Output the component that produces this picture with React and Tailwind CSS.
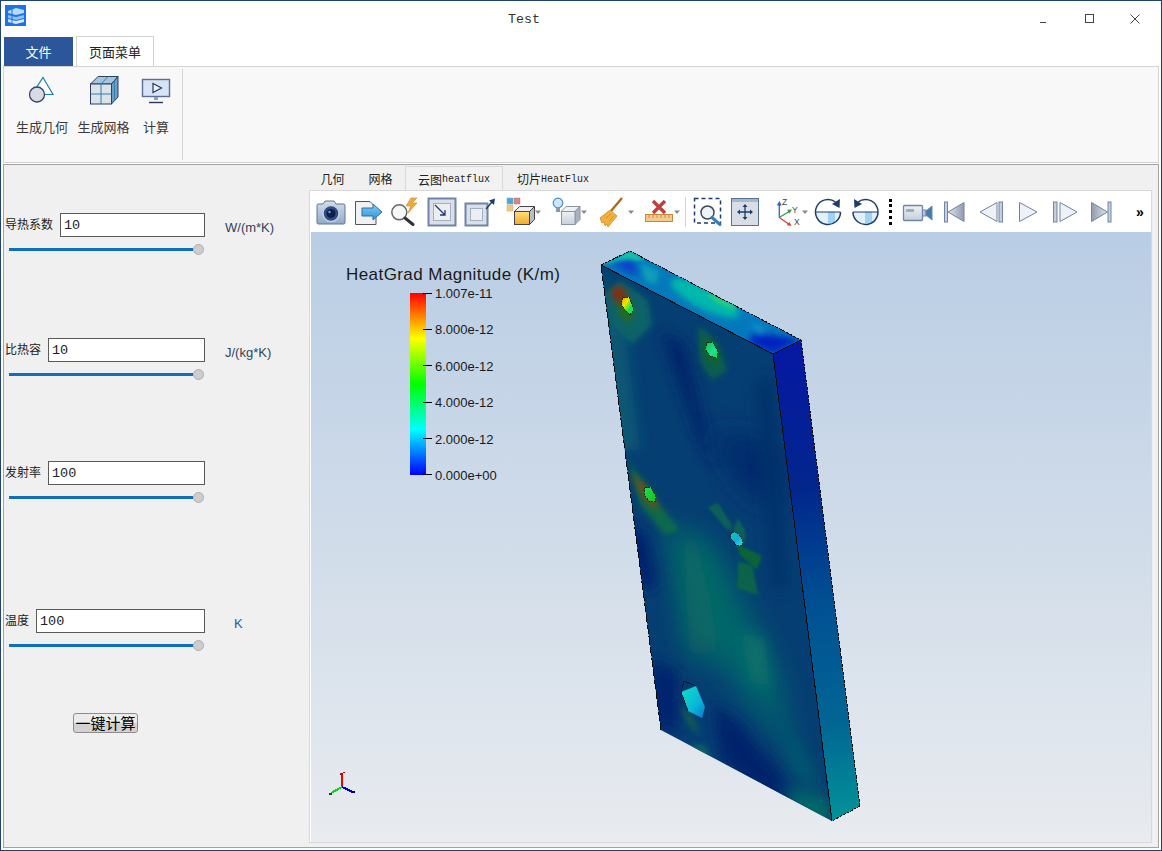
import React from "react";

const CJK = "font-['Noto_Sans_CJK_SC','Liberation_Sans',sans-serif]";
const NAVY = "#1f3b6e";
const EDGE = "#6f84a8";

function Ico({ w = 37, children }) {
  return (
    <div className="flex items-center justify-center shrink-0 h-[36px]" style={{ width: w }}>
      <svg width={w} height="36" viewBox={`0 0 ${w} 36`} fill="none">{children}</svg>
    </div>
  );
}
const Drop = ({ x }) => <path d={`M${x - 3} 16.5h6l-3 3.5z`} fill="#8a8a8a" />;

function Toolbar() {
  return (
    <div className="h-[41px] bg-white flex items-center pl-[2px] shrink-0 pt-px">
      <Ico>
        <defs>
          <linearGradient id="gBody" x1="0" y1="0" x2="0" y2="1"><stop offset="0" stopColor="#d5deea" /><stop offset="1" stopColor="#93a9c6" /></linearGradient>
          <linearGradient id="gPale" x1="0" y1="0" x2="0" y2="1"><stop offset="0" stopColor="#eef1f5" /><stop offset="1" stopColor="#c6cfdb" /></linearGradient>
          <linearGradient id="gDarkTri" x1="0" y1="0" x2="1" y2="0"><stop offset="0" stopColor="#8f9bae" /><stop offset="1" stopColor="#dfe3ea" /></linearGradient>
          <linearGradient id="gDarkTriR" x1="1" y1="0" x2="0" y2="0"><stop offset="0" stopColor="#8f9bae" /><stop offset="1" stopColor="#dfe3ea" /></linearGradient>
          <linearGradient id="gYel" x1="0" y1="0" x2="0" y2="1"><stop offset="0" stopColor="#ffdf7a" /><stop offset="1" stopColor="#f3a92c" /></linearGradient>
          <linearGradient id="gBlueArrow" x1="0" y1="0" x2="0" y2="1"><stop offset="0" stopColor="#7fcdf3" /><stop offset="1" stopColor="#2f93d6" /></linearGradient>
        </defs>
        <path d="M5 10h5l2-3h9l2 3h8a1.500 1.500 0 0 1 1 1v18a1.500 1.500 0 0 1-1 1H5a1.500 1.500 0 0 1-1-1V11a1.500 1.500 0 0 1 1-1z" fill="url(#gBody)" stroke="#5c769c" />
        <circle cx="18" cy="19.500" r="8" fill="#2c4c86" stroke="#c5d0df" strokeWidth="1.500" />
        <circle cx="18" cy="19.500" r="4.500" fill="#0f1f48" />
        <circle cx="16.500" cy="18" r="1.200" fill="#7f9ad0" />
      </Ico>
      <Ico>
        <path d="M5.500 7.500H20l6 6v17H5.500z" fill="#f1f1f1" stroke="#555" />
        <path d="M12 14H23V10L32 18L23 26V22H12Z" fill="url(#gBlueArrow)" stroke="#2a6fa8" />
      </Ico>
      <Ico>
        <path d="M24 4l-5 8h5l-3 7 9-10h-5l5-5z" fill="#f2a93a" stroke="#d08420" strokeWidth=".6" />
        <circle cx="12.300" cy="18.300" r="7.500" fill="#f4f6f8" stroke="#666" strokeWidth="1.500" />
        <path d="M18 24l8 6.500" stroke="#333" strokeWidth="3" strokeLinecap="round" />
      </Ico>
      <Ico>
        <rect x="4.500" y="4.500" width="27" height="27" fill="#dbe0e8" stroke={EDGE} strokeWidth="2" />
        <rect x="9.500" y="9.500" width="17" height="17" fill="#eceef2" stroke="#a4afc0" />
        <path d="M11 11l10 10M21 16v5h-5" stroke={NAVY} strokeWidth="1.300" />
      </Ico>
      <Ico>
        <rect x="4.500" y="9.500" width="22" height="22" fill="#dbe0e8" stroke={EDGE} strokeWidth="2" />
        <rect x="9.500" y="14.500" width="12" height="12" fill="#eceef2" stroke="#a4afc0" />
        <path d="M25 15L31 8" stroke={NAVY} strokeWidth="1.400" />
        <path d="M34 4.500l-1 6.500-5-4.500z" fill={NAVY} />
      </Ico>
      <Ico w={48}>
        <rect x="9" y="4" width="6" height="6" fill="#4ea5e0" stroke="#8aa" strokeWidth=".5" />
        <rect x="16" y="4" width="6" height="6" fill="#d08a8a" stroke="#a77" strokeWidth=".5" />
        <rect x="9" y="11" width="6" height="6" fill="#f2c77a" stroke="#ba8" strokeWidth=".5" />
        <path d="M16.500 17.500l5-5h15l-5 5z" fill="#eef0f3" stroke="#444" />
        <path d="M31.500 17.500l5-5v13l-5 5z" fill="#b8bec8" stroke="#444" />
        <rect x="16.500" y="17.500" width="15" height="13" fill="url(#gYel)" stroke="#444" />
        <Drop x={40} />
      </Ico>
      <Ico w={48}>
        <path d="M15 17.500l5-5h14l-5 5z" fill="#eef0f3" stroke="#8a95a4" />
        <path d="M29 17.500l5-5v13l-5 5z" fill="#aab2bd" stroke="#8a95a4" />
        <rect x="15.500" y="17.500" width="13.500" height="13" fill="url(#gPale)" stroke="#8a95a4" />
        <circle cx="12" cy="9" r="4.800" fill="#cfe6f8" stroke="#3f8fd0" strokeWidth="1.200" />
        <rect x="10" y="14" width="4" height="4" fill="#8d99a8" />
        <Drop x={38} />
      </Ico>
      <Ico w={44}>
        <path d="M28 4L17 17" stroke="#b06a20" strokeWidth="2.400" />
        <path d="M6 24l10-8 7 6-9 11-1-3-2 2-1-4-2 1z" fill="#f0b040" stroke="#c98a20" strokeWidth=".8" />
        <path d="M12 24l5-4M15 27l5-5" stroke="#c98a20" strokeWidth=".7" />
        <Drop x={37} />
      </Ico>
      <Ico w={44}>
        <path d="M15 7l12 12M27 7L15 19" stroke="#bf3f3f" strokeWidth="3.400" />
        <rect x="7.500" y="20.500" width="27" height="7" fill="#f3cb8e" stroke="#c58a38" />
        <path d="M11 21v3M15 21v3M19 21v3M23 21v3M27 21v3M31 21v3" stroke="#b97f30" strokeWidth=".8" />
        <Drop x={39} />
      </Ico>
      <div className="w-px h-[30px] bg-[#d4d4d4] mx-[3px] shrink-0" />
      <Ico>
        <rect x="5.500" y="4.500" width="26" height="24.500" stroke={NAVY} strokeWidth="1.500" strokeDasharray="4 3" />
        <circle cx="18.500" cy="18.500" r="6.500" fill="#eef3f8" stroke="#3c4a5c" strokeWidth="1.500" />
        <path d="M23 23.500l8 7" stroke="#2f7fc4" strokeWidth="3" strokeLinecap="round" />
      </Ico>
      <Ico>
        <rect x="5.500" y="4.500" width="27" height="27" fill="#d8dde6" stroke="#5a7096" />
        <rect x="6" y="5" width="26" height="3" fill="#a9b7cb" />
        <path d="M19 11v14M12 18h14" stroke={NAVY} strokeWidth="1.300" />
        <path d="M19 10l-2.500 3h5zM19 26l-2.500-3h5zM11 18l3-2.500v5zM27 18l-3-2.500v5z" fill={NAVY} />
      </Ico>
      <div className="w-[4px] shrink-0" />
      <Ico w={43}>
        <path d="M12.300 23.500V10" stroke="#2f62b8" strokeWidth="1.300" />
        <path d="M12.300 7l-2.500 4.500h5z" fill="#2f62b8" />
        <path d="M12.300 23.500L23 17" stroke="#2f9a48" strokeWidth="1.300" />
        <path d="M25 15.500l-4.800.3 2.200 3.800z" fill="#2f9a48" />
        <path d="M12.300 23.500l10 7" stroke="#d84040" strokeWidth="1.300" />
        <path d="M24.500 32l-4.600-.8 2.500-3.500z" fill="#d84040" />
        <text x="15" y="11" fontSize="8.500" fill="#444" fontFamily="Liberation Sans, sans-serif">Z</text>
        <text x="25" y="18.500" fontSize="8.500" fill="#444" fontFamily="Liberation Sans, sans-serif">Y</text>
        <text x="27" y="31" fontSize="8.500" fill="#444" fontFamily="Liberation Sans, sans-serif">X</text>
        <Drop x={38} />
      </Ico>
      <Ico>
        <path d="M5.500 18a12.500 12.500 0 0 0 25 0z" fill="#e2f0fa" />
        <rect x="18" y="18" width="7" height="11" fill="#9ed3f3" />
        <path d="M5.500 18h25" stroke={NAVY} strokeWidth="1" />
        <path d="M25.500 8A12.500 12.500 0 1 0 30.500 18" stroke={NAVY} strokeWidth="1.500" />
        <path d="M30 5l-.5 9-7.500-4z" fill={NAVY} />
      </Ico>
      <Ico>
        <path d="M6 18a12.500 12.500 0 0 0 25 0z" fill="#e2f0fa" />
        <rect x="18" y="18" width="7" height="11" fill="#9ed3f3" />
        <path d="M6 18h25" stroke={NAVY} strokeWidth="1" />
        <path d="M11 8A12.500 12.500 0 1 1 6 18" stroke={NAVY} strokeWidth="1.500" />
        <path d="M7 5l.5 9 7.500-4z" fill={NAVY} />
      </Ico>
      <div className="w-[12px] mr-[2px] h-[36px] flex items-center justify-center shrink-0">
        <div className="h-[26px] border-l-[3px] border-dotted border-black" />
      </div>
      <Ico w={39}>
        <rect x="5.500" y="11.500" width="19" height="15" rx="1" fill="url(#gPale)" stroke={EDGE} strokeWidth="1.300" />
        <rect x="8" y="15" width="8" height="3" fill="#a4aebc" />
        <rect x="24.500" y="16" width="3.500" height="6" fill="#b8c3d2" stroke={EDGE} />
        <path d="M28 17l6-5v14l-6-5z" fill="#3f7fb0" stroke={EDGE} />
      </Ico>
      <Ico>
        <rect x="7.500" y="8" width="3" height="20" fill="#c7cfdb" stroke={EDGE} />
        <path d="M11 18L27 8.500v19z" fill="url(#gDarkTriR)" stroke={EDGE} />
      </Ico>
      <Ico>
        <path d="M6 18L23 8.500v19z" fill="#eef1f5" stroke={EDGE} />
        <rect x="25" y="8" width="3.500" height="20" fill="#c7cfdb" stroke={EDGE} />
      </Ico>
      <Ico>
        <path d="M8.500 8.500L26 18 8.500 27.500z" fill="#eef1f5" stroke={EDGE} />
      </Ico>
      <Ico>
        <rect x="5.500" y="8" width="3.500" height="20" fill="#c7cfdb" stroke={EDGE} />
        <path d="M12 8.500L29 18 12 27.500z" fill="#eef1f5" stroke={EDGE} />
      </Ico>
      <Ico>
        <path d="M6.500 8.500L22.500 18 6.500 27.500z" fill="url(#gDarkTri)" stroke={EDGE} />
        <rect x="23" y="8" width="3" height="20" fill="#c7cfdb" stroke={EDGE} />
      </Ico>
      <span className="ml-[14px] text-[14px] leading-none font-bold text-black font-['Liberation_Sans',sans-serif]">»</span>
    </div>
  );
}

function Scene() {
  const front = "601,265 773,354 832,821 661,730";
  const top = "601,265 630,251 801,340 773,354";
  const right = "773,354 801,340 860,806 832,821";
  return (
    <svg className="absolute inset-0" width="840" height="609" viewBox="311 232 840 609" fill="none">
      <defs>
        <clipPath id="cFront"><polygon points={front} /></clipPath>
        <clipPath id="cTop"><polygon points={top} /></clipPath>
        <filter id="b14" x="-50%" y="-50%" width="200%" height="200%"><feGaussianBlur stdDeviation="14" /></filter>
        <filter id="b7" x="-50%" y="-50%" width="200%" height="200%"><feGaussianBlur stdDeviation="7" /></filter>
        <filter id="b3" x="-50%" y="-50%" width="200%" height="200%"><feGaussianBlur stdDeviation="3" /></filter>
        <filter id="b1" x="-50%" y="-50%" width="200%" height="200%"><feGaussianBlur stdDeviation="1.800" /></filter>
        <linearGradient id="gRight" gradientUnits="userSpaceOnUse" x1="790" y1="345" x2="845" y2="815">
          <stop offset="0" stopColor="#0618a4" />
          <stop offset=".3" stopColor="#02268c" />
          <stop offset=".55" stopColor="#015092" />
          <stop offset=".8" stopColor="#016594" />
          <stop offset="1" stopColor="#029098" />
        </linearGradient>
        <linearGradient id="gH1" x1="0" y1="0" x2="1" y2="1"><stop offset="0" stopColor="#ff8a00" /><stop offset=".35" stopColor="#e8e800" /><stop offset=".65" stopColor="#20e040" /><stop offset="1" stopColor="#00d8b0" /></linearGradient>
        <linearGradient id="gH2" x1="0" y1="0" x2="1" y2="1"><stop offset="0" stopColor="#10c040" /><stop offset=".6" stopColor="#20e090" /><stop offset="1" stopColor="#00e040" /></linearGradient>
        <linearGradient id="gH3" x1="0" y1="0" x2="1" y2="1"><stop offset="0" stopColor="#20e050" /><stop offset="1" stopColor="#10c020" /></linearGradient>
        <linearGradient id="gH4" x1="0" y1="0" x2="1" y2="1"><stop offset="0" stopColor="#10d0a0" /><stop offset=".5" stopColor="#10a8d8" /><stop offset="1" stopColor="#30e8d0" /></linearGradient>
        <linearGradient id="gH5" x1="0" y1="0" x2="1" y2="1"><stop offset="0" stopColor="#10e0c0" /><stop offset=".6" stopColor="#08b8d8" /><stop offset="1" stopColor="#0878d0" /></linearGradient>
      </defs>

      {/* top face */}
      <polygon points={top} fill="#0478bc" />
      <g clipPath="url(#cTop)">
        <polygon points="601,265 630,251 645,260 615,262" fill="#12c8a4" filter="url(#b1)" />
        <polygon points="612,263 632,260 640,276 628,272" fill="#0a3ccc" filter="url(#b3)" />
        <polygon points="640,262 660,272 655,285 645,280" fill="#0aa0b8" filter="url(#b3)" />
        <ellipse cx="705" cy="298" rx="38" ry="11" transform="rotate(27 705 298)" fill="#04b8ac" filter="url(#b3)" />
        <ellipse cx="722" cy="302" rx="16" ry="3" transform="rotate(27 722 302)" fill="#20cc80" filter="url(#b1)" />
        <polygon points="755,332 801,340 773,354 748,342" fill="#0620c0" filter="url(#b3)" />
        <polygon points="748,322 768,328 760,336" fill="#0a90c8" filter="url(#b3)" />
      </g>

      {/* right face */}
      <polygon points={right} fill="url(#gRight)" />

      {/* front face */}
      <polygon points={front} fill="#053e72" />
      <g clipPath="url(#cFront)">
        <polygon points="601,265 625,330 640,450 600,450" fill="#0b5874" filter="url(#b7)" />
        <polygon points="660,330 685,345 715,470 695,430" fill="#02236a" filter="url(#b7)" />
        <polygon points="710,430 775,445 785,510 745,490" fill="#02286c" filter="url(#b14)" />
        <polygon points="755,385 772,375 788,590 772,590" fill="#03306a" filter="url(#b7)" />
        <polygon points="625,525 648,535 658,585 640,590" fill="#02246e" filter="url(#b7)" />
        <polygon points="650,660 678,672 678,730 655,730" fill="#02246e" filter="url(#b7)" />
        <polygon points="712,705 740,722 800,800 780,810 722,760" fill="#02226c" filter="url(#b7)" />
        <polygon points="665,520 720,555 780,680 790,750 740,690 690,630" fill="#05666a" filter="url(#b14)" />
        <polygon points="680,540 700,540 720,650 690,660" fill="#086a62" filter="url(#b14)" />
        <polygon points="740,630 765,640 770,690 750,680" fill="#07706a" filter="url(#b7)" />
        <polygon points="770,700 812,760 820,800 790,770" fill="#035570" filter="url(#b7)" />
        <polygon points="780,785 830,800 832,825 800,815" fill="#056a68" filter="url(#b7)" />
        <polygon points="690,745 705,745 712,760 695,760" fill="#086068" filter="url(#b3)" />

        {/* hole halos */}
        <polygon points="605,295 620,280 648,300 652,325 632,345 612,325" fill="#0b6468" filter="url(#b3)" />
        <ellipse cx="620" cy="296" rx="7" ry="11" transform="rotate(-30 620 296)" fill="#8a2c10" filter="url(#b3)" />
        <ellipse cx="626" cy="310" rx="7" ry="12" transform="rotate(-20 626 310)" fill="#286a1c" filter="url(#b3)" />
        <polygon points="698,325 708,333 718,345 728,370 712,380 700,362" fill="#0a5f50" filter="url(#b3)" />
        <ellipse cx="711" cy="352" rx="6" ry="13" transform="rotate(-22 711 352)" fill="#0a6420" filter="url(#b3)" />
        <polygon points="628,460 660,505 680,530 665,535 640,505" fill="#0c6a4c" filter="url(#b3)" />
        <polygon points="630,472 650,490 660,512 645,500" fill="#7a4a10" filter="url(#b3)" />
        <polygon points="708,507 718,503 733,527 727,530" fill="#0a6058" filter="url(#b1)" />
        <polygon points="738,518 745,530 745,545 733,530" fill="#0b6058" filter="url(#b1)" />
        <polygon points="737,544 762,556 757,570 740,555" fill="#0a6438" filter="url(#b1)" />
        <polygon points="738,562 752,565 758,595 737,588" fill="#0a6448" filter="url(#b1)" />
        <polygon points="680,705 690,715 700,735 690,725" fill="#1a7040" filter="url(#b3)" />

        {/* holes */}
        <polygon points="623,298 629,297 634,309 630,315 624,309 621,303" fill="url(#gH1)" stroke="#111" strokeWidth=".8" strokeDasharray="2 1" shapeRendering="crispEdges" />
        <polygon points="707,343 713,342 718,352 717,358 710,356 705,349" fill="url(#gH2)" stroke="#111" strokeWidth=".8" strokeDasharray="2 1" shapeRendering="crispEdges" />
        <polygon points="645,488 651,487 656,497 655,502 649,501 644,494" fill="url(#gH3)" stroke="#111" strokeWidth=".8" strokeDasharray="2 1" shapeRendering="crispEdges" />
        <polygon points="732,532 737,532 743,541 742,546 736,545 730,537" fill="url(#gH4)" stroke="#111" strokeWidth=".8" strokeDasharray="2 1" shapeRendering="crispEdges" />
        <polygon points="681,692 696,686 705,707 702,718 688,711" fill="url(#gH5)" />
        <path d="M688 711L681 692L684 681L696 686" fill="none" stroke="#111" strokeWidth=".8" shapeRendering="crispEdges" />
      </g>

      {/* edges */}
      <g shapeRendering="crispEdges" stroke="#0b0b0b" strokeWidth="1" fill="none">
        <path d="M601 265L773 354L832 821" />
        <path d="M773 354L801 340" />
        <path d="M601 265L661 730" strokeDasharray="9 2" />
        <path d="M601 265L630 251L801 340L860 806" strokeDasharray="3 1" />
        <path d="M860 806L832 821" strokeDasharray="3 1" />
      </g>

      {/* orientation axes */}
      <g shapeRendering="crispEdges">
        <path d="M342 787V775" stroke="#f00000" strokeWidth="2" />
        <path d="M342 787L331 793" stroke="#00e000" strokeWidth="2" />
        <path d="M342 787L353 792" stroke="#0000c8" strokeWidth="2" />
        <path d="M340 775h3v-2h-3zM343 772h2v1h-2z" fill="#d00000" />
        <path d="M329 793h3v2h-3z" fill="#006000" />
        <path d="M351 791h4v2h-4z" fill="#000080" />
      </g>
    </svg>
  );
}

const TICKS = ["1.007e-11", "8.000e-12", "6.000e-12", "4.000e-12", "2.000e-12", "0.000e+00"];

function Legend() {
  return (
    <div className="absolute left-[35px] top-[31px] text-[#1a1a1a] font-['Liberation_Sans',sans-serif]">
      <div className="text-[17px] leading-[20px] mt-[2px] whitespace-nowrap tracking-[0.43px]">HeatGrad Magnitude (K/m)</div>
      <div className="flex ml-[64px] mt-[8px]">
        <div className="w-[16px] h-[182px] bg-[linear-gradient(to_top,#0000ff,#00ffff_25%,#00ff00_50%,#ffff00_75%,#ff0000)]" />
        <div className="flex flex-col justify-between h-[182px] -ml-[3px]">
          {TICKS.map((t) => (
            <div key={t} className="h-0 flex items-center">
              <div className="w-[9px] h-px bg-black" />
              <span className="ml-[3px] text-[13px] leading-[13px] pt-[1px] whitespace-nowrap">{t}</span>
            </div>
          ))}
        </div>
      </div>
    </div>
  );
}

function Field({ label, labelW, value, unit, unitClass, unitMt = "mt-[5px]" }) {
  return (
    <div className="shrink-0">
      <div className="flex items-start pl-px h-[24px]">
        <span className={`${CJK} text-[12px] leading-[22px] text-[#222] whitespace-nowrap shrink-0`} style={{ width: labelW }}>{label}</span>
        <div className="h-[24px] bg-white border border-[#5a5a5a] flex items-center pl-[3px] pt-[3px] font-['Liberation_Mono',monospace] text-[13.500px] text-[#222] shrink-0" style={{ width: 200 - labelW }}>{value}</div>
        <span className={`${unitMt} ${unitClass} font-['Liberation_Sans',sans-serif] text-[13px] leading-[20px] text-[#33435c] whitespace-nowrap`}>{unit}</span>
      </div>
      <div className="flex items-center h-[12px] mt-[6px] ml-[5px]">
        <div className="w-[184px] h-[3px] bg-[#106ebe]" />
        <div className="w-[11px] h-[11px] rounded-full bg-[#cdcdcd] border border-[#adadad]" />
      </div>
    </div>
  );
}

function RibbonTool({ label, w, children }) {
  return (
    <div className="flex flex-col items-center shrink-0" style={{ width: w }}>
      <div className="h-[44px] flex items-start">{children}</div>
      <span className={`${CJK} mt-[2px] text-[13px] leading-[20px] text-[#3a3a3a] whitespace-nowrap`}>{label}</span>
    </div>
  );
}

export default function App() {
  return (
    <div className={`w-[1162px] h-[851px] bg-white border border-[#1d4173] flex flex-col overflow-hidden ${CJK}`}>
      {/* title bar */}
      <div className="h-[36px] shrink-0 flex items-start relative">
        <svg className="mt-[4px] ml-[4px]" width="21" height="21" viewBox="0 0 21 21">
          <rect width="21" height="21" fill="#1a73e8" />
          <path d="M3 6l8-3 8 2v3l-8 2-8-2z" fill="#bcd8fa" />
          <path d="M3 10l8 2 8-2v3l-8 2-8-2z" fill="#8fc0f6" />
          <path d="M3 14l8 2 8-2v3l-8 2-8-2z" fill="#d6e6fb" />
          <path d="M7 4v14" stroke="#1a73e8" strokeWidth="1" />
        </svg>
        <span className="absolute left-[507px] top-[10px] font-['Liberation_Mono',monospace] text-[13.300px] leading-[17px] text-[#333]">Test</span>
        <div className="ml-auto flex items-center h-[36px] pr-[3px]">
          <svg className="w-[46px]" height="12" viewBox="0 0 46 12"><path d="M20 9.500h6" stroke="#444" /></svg>
          <svg className="w-[46px]" height="12" viewBox="0 0 46 12"><rect x="19.500" y="1.500" width="8" height="8" fill="none" stroke="#444" /></svg>
          <svg className="w-[46px]" height="12" viewBox="0 0 46 12"><path d="M18.500 1.500l9 9M27.500 1.500l-9 9" stroke="#444" /></svg>
        </div>
      </div>

      {/* ribbon tabs */}
      <div className="h-[29px] shrink-0 flex items-stretch pl-[3px] relative z-10">
        <div className="w-[69px] bg-[#2b579a] text-white text-[13px] flex items-center justify-center">文件</div>
        <div className="ml-[3px] w-[78px] h-[30px] bg-white border border-[#d2d2d2] border-b-0 -mt-px text-[13px] text-[#222] flex items-center justify-center">页面菜单</div>
      </div>

      {/* ribbon */}
      <div className="h-[97px] shrink-0 mx-[2px] bg-[#f8f8f8] border border-[#d2d2d2] flex pt-[2px] pb-[2px]">
        <div className="w-[179px] border-r border-[#d4d4d4] flex pl-[8px] pt-[2px]">
          <RibbonTool label="生成几何" w={60}>
            <svg width="32" height="30" viewBox="0 0 32 30" className="mt-[3px] -ml-[4px]">
              <path d="M19 3.500L29 20.500H8z" fill="#fff" stroke="#1a7fc0" strokeWidth="1.200" />
              <circle cx="13" cy="20.500" r="7.500" fill="#d7dbe4" stroke="#34436b" strokeWidth="1.300" />
            </svg>
          </RibbonTool>
          <RibbonTool label="生成网格" w={63}>
            <svg width="30" height="30" viewBox="0 0 30 30" className="mt-[4px]">
              <path d="M1.500 9l7.500-7.500h20L22.500 9z" fill="#a9c3dc" stroke="#2b3f66" />
              <path d="M22.500 9L29 1.500V22l-6.500 7z" fill="#6f9cc0" stroke="#2b3f66" />
              <rect x="1.500" y="9" width="21" height="20" fill="#dde1e8" stroke="#2b3f66" />
              <path d="M12 9v20M1.500 19h21M12 9l7-7.500M25.500 5.500v20" stroke="#2f7fb8" fill="none" />
            </svg>
          </RibbonTool>
          <RibbonTool label="计算" w={42}>
            <svg width="30" height="26" viewBox="0 0 30 26" className="mt-[7px]">
              <rect x="1.500" y="1.500" width="27" height="17" fill="#d6e4f5" stroke="#5c6f92" strokeWidth="1.400" />
              <path d="M12 5.500l8.500 4.500-8.500 4.500z" fill="#eef4fb" stroke="#27365f" strokeWidth="1.200" />
              <path d="M13 19h4v3h-4z" fill="#8ea0bd" />
              <path d="M8 24.500h14" stroke="#27365f" strokeWidth="1.400" />
            </svg>
          </RibbonTool>
        </div>
      </div>

      {/* main area */}
      <div className="flex-1 mt-px mb-[2px] mx-[2px] border border-[#a3a3a3] bg-[#f0f0f0] flex min-h-0">
        {/* left panel */}
        <div className="w-[305px] shrink-0 flex flex-col pt-[48px]">
          <Field label="导热系数" labelW={55} value="10" unit="W/(m*K)" unitClass="ml-[20px]" />
          <div className="mt-[83px]"><Field label="比热容" labelW={43} value="10" unit="J/(kg*K)" unitClass="ml-[20px] mt-[5px]" /></div>
          <div className="mt-[81px]"><Field label="发射率" labelW={43} value="100" unit="" unitClass="" /></div>
          <div className="mt-[106px]"><Field label="温度" labelW={31} value="100" unit="K" unitClass="ml-[29px] !text-[#1f5a9c]" /></div>
          <button className="mt-[62px] ml-[69px] w-[65px] h-[20px] rounded-[3px] border border-[#8c8c8c] bg-[linear-gradient(to_bottom,#ececec_50%,#d2d2d2_50%)] text-[15px] leading-[18px] text-black flex items-center justify-center whitespace-nowrap">一键计算</button>
        </div>

        {/* right panel */}
        <div className="w-[843px] flex flex-col shrink-0">
          <div className="h-[25px] shrink-0 flex items-end text-[12px] text-[#222]">
            <div className="w-[47px] h-[24px] pt-[2px] flex items-center justify-center">几何</div>
            <div className="w-[49px] h-[24px] pt-[2px] flex items-center justify-center">网格</div>
            <div className="w-[98px] h-[24px] pt-[2px] flex items-center justify-center bg-[#f2f2f2] border border-[#d9d9d9] border-b-0">云图<span className="font-['Liberation_Mono',monospace] text-[10px]">heatflux</span></div>
            <div className="w-[100px] h-[24px] pt-[2px] flex items-center justify-center">切片<span className="font-['Liberation_Mono',monospace] text-[10px]">HeatFlux</span></div>
          </div>
          <div className="h-[653px] shrink-0 border border-[#d9d9d9] bg-white pl-px flex flex-col">
            <Toolbar />
            <div className="flex-1 relative overflow-hidden bg-[linear-gradient(to_bottom,#b9cde4,#e8ebef)]">
              <Scene />
              <Legend />
            </div>
          </div>
        </div>
      </div>
    </div>
  );
}
